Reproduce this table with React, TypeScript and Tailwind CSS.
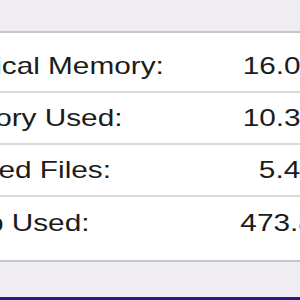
import React from "react";

const rows = [
  { label: "Physical Memory:", value: "16.00 GB" },
  { label: "Memory Used:", value: "10.39 GB" },
  { label: "Cached Files:", value: "5.41 GB" },
  { label: "Swap Used:", value: "473.8 MB" },
];

export default function App() {
  return (
    <div
      className="w-[300px] h-[300px] overflow-hidden flex flex-col bg-[#efedf2] text-[#1c1c1c]"
      style={{ fontFamily: '"Liberation Sans", Arial, sans-serif' }}
    >
      <div className="h-[31px] shrink-0" />
      <div className="shrink-0 bg-white border-t-2 border-b-2 border-t-[#c6c6c8] border-b-[#c6c6c8] pt-[8px] pb-[11px]">
        <div className="ml-[-71px] w-[439px]">
          {rows.map((r, i) => (
            <div
              key={r.label}
              className={
                "h-[52px] flex items-center justify-between text-[24px] leading-none " +
                (i < rows.length - 1 ? "border-b-2 border-[#d9d9db]" : "")
              }
            >
              <span className="inline-block whitespace-nowrap origin-left scale-x-[1.24]">{r.label}</span>
              <span className="inline-block whitespace-nowrap origin-right scale-x-[1.24]">{r.value}</span>
            </div>
          ))}
        </div>
      </div>
      <div className="flex-1" />
      <div className="h-[3px] shrink-0 bg-[#2b1a7c]" />
    </div>
  );
}
